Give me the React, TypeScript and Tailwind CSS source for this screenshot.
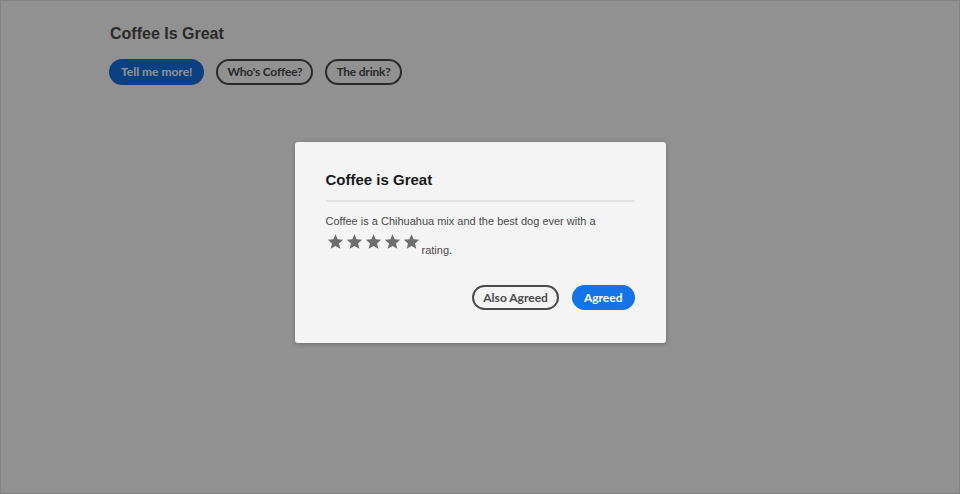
import React from "react";

function Star() {
  return (
    <svg width="17" height="17" viewBox="0 0 24 24" className="shrink-0">
      <path
        d="M12 1.8l3.1 7.1 7.7.7-5.8 5.1 1.7 7.6L12 18.3l-6.7 4 1.7-7.6-5.8-5.1 7.7-.7z"
        fill="#6e6e6e"
      />
    </svg>
  );
}

export default function App() {
  const btn = "font-['Lato',sans-serif] font-bold text-[12px] rounded-full";

  return (
    <div className="relative w-[960px] h-[494px] bg-white overflow-hidden">
      <div className="pl-[110px] pt-[23px] font-['Liberation_Sans',Arial,sans-serif]">
        <h1 className="text-[16px] leading-[21px] font-bold text-[#4b4b4b]">Coffee Is Great</h1>
        <div className="flex gap-[12px] mt-[15px] -ml-px">
          <button className={`${btn} h-[26px] px-[10px] bg-[#1473e6] text-white border-2 border-[#1473e6]`}>
            Tell me more!
          </button>
          <button className={`${btn} h-[26px] px-[9px] tracking-[-0.2px] text-[#4b4b4b] border-2 border-[#4b4b4b]`}>
            Who's Coffee?
          </button>
          <button className={`${btn} h-[26px] px-[9px] tracking-[-0.2px] text-[#4b4b4b] border-2 border-[#4b4b4b]`}>
            The drink?
          </button>
        </div>
      </div>

      <div className="absolute inset-0 bg-black/[0.43] border border-black/10 flex items-start justify-center pt-[141px]">
        <div className="w-[371px] h-[201px] bg-[#f4f4f4] rounded-[3px] shadow-[0_1px_4px_rgba(0,0,0,0.25)] px-[31px] pt-[28px] font-['Liberation_Sans',Arial,sans-serif]">
          <h2 className="text-[15px] leading-[20px] font-bold text-[#1a1a1a]">Coffee is Great</h2>
          <div className="h-[2px] bg-[#e1e1e1] mt-[10px]" />
          <div className="mt-[11px] text-[11px] leading-[17px] text-[#4b4b4b]">
            Coffee is a Chihuahua mix and the best dog ever with a
          </div>
          <div className="flex items-end mt-[3px] text-[11px] text-[#4b4b4b]">
            <div className="flex gap-[2px] pl-[1px]">
              <Star />
              <Star />
              <Star />
              <Star />
              <Star />
            </div>
            <span className="ml-[2px] leading-[12px] relative top-[6px]">rating.</span>
          </div>
          <div className="flex justify-end gap-[13px] mt-[35px]">
            <button className={`${btn} h-[25px] px-[9px] text-[#4b4b4b] border-2 border-[#4b4b4b]`}>
              Also Agreed
            </button>
            <button className={`${btn} h-[25px] px-[10px] bg-[#1473e6] text-white border-2 border-[#1473e6]`}>
              Agreed
            </button>
          </div>
        </div>
      </div>
    </div>
  );
}
